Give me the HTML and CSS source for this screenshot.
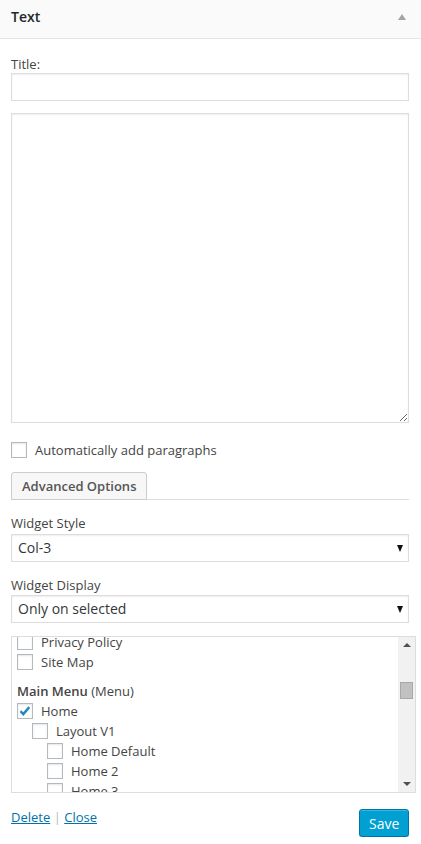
FILE: index.html
```html
<!DOCTYPE html>
<html lang="en">
<head>
    <meta charset="UTF-8">
    <meta name="viewport" content="width=device-width, initial-scale=1.0">
    <title>Text Widget</title>
    <link rel="stylesheet" href="styles.css">
</head>
<body>
    <div class="widget">
        <div class="widget-top">
            <h3>Text</h3>
            <span class="widget-toggle"></span>
        </div>

        <div class="widget-inside">
            <p class="field">
                <label for="title">Title:</label>
                <input type="text" id="title" class="widefat">
            </p>

            <textarea class="widefat text-body" rows="16"></textarea>

            <p class="check-row">
                <span class="cb"></span>
                <span>Automatically add paragraphs</span>
            </p>

            <div class="tabs">
                <button class="button">Advanced Options</button>
            </div>

            <p class="field select-field">
                <label>Widget Style</label>
                <span class="select-wrap">
                    <select class="widefat"><option>Col-3</option></select>
                </span>
            </p>

            <p class="field select-field">
                <label>Widget Display</label>
                <span class="select-wrap">
                    <select class="widefat"><option>Only on selected</option></select>
                </span>
            </p>

            <!-- page / menu checklist -->
            <div class="checklist">
                <div class="checklist-items">
                    <div class="item"><span class="cb"></span>Privacy Policy</div>
                    <div class="item"><span class="cb"></span>Site Map</div>
                    <div class="group-title"><strong>Main Menu</strong> (Menu)</div>
                    <div class="item">
                        <span class="cb checked">
                            <svg viewBox="0 0 16 16" width="16" height="16"><path d="M3.5 8.2l2.8 2.9 6-7" fill="none" stroke="#1e8cbe" stroke-width="2.4"/></svg>
                        </span>Home
                    </div>
                    <div class="item level-1"><span class="cb"></span>Layout V1</div>
                    <div class="item level-2"><span class="cb"></span>Home Default</div>
                    <div class="item level-2"><span class="cb"></span>Home 2</div>
                    <div class="item level-2"><span class="cb"></span>Home 3</div>
                </div>
                <div class="scrollbar">
                    <span class="arrow-up"></span>
                    <div class="track"><span class="thumb"></span></div>
                    <span class="arrow-down"></span>
                </div>
            </div>

            <div class="widget-control-actions">
                <div class="links">
                    <a href="#">Delete</a> <span class="sep">|</span> <a href="#">Close</a>
                </div>
                <button class="button button-primary">Save</button>
            </div>
        </div>
    </div>
</body>
</html>
```

FILE: styles.css
```css
/* Text widget (admin style) */
body {
    margin: 0;
    background: #fff;
    font-family: "Open Sans", "Liberation Sans", sans-serif;
    font-size: 13px;
    line-height: 18px;
    color: #444;
}

.widget-top {
    height: 38px;
    border-bottom: 1px solid #e5e5e5;
    background-color: #fafafa;
    display: flex;
    align-items: center;
    justify-content: space-between;
    padding: 0 15px 0 11px;
}

.widget-top h3 {
    margin: 0 0 5px;
    font-size: 14px;
    font-weight: 600;
    color: #23282d;
}

.widget-toggle {
    width: 0;
    height: 0;
    border-left: 4px solid transparent;
    border-right: 4px solid transparent;
    border-bottom: 6px solid #a0a5aa;
    margin-bottom: 5px;
}

.widget-inside {
    padding: 0 12px 0 11px;
}

.field {
    margin: 16px 0 0;
}

.field label {
    display: block;
}

.widefat {
    display: block;
    width: 100%;
    box-sizing: border-box;
    border: 1px solid #ddd;
    box-shadow: inset 0 1px 2px rgba(0,0,0,0.07);
    background-color: #fff;
    font-family: inherit;
    color: #32373c;
    margin: 0;
}

input.widefat {
    height: 28px;
}

.text-body {
    margin-top: 12px;
    height: 310px;
}

.check-row {
    margin: 18px 0 0;
    display: flex;
    align-items: center;
}

.cb {
    display: inline-block;
    width: 16px;
    height: 16px;
    box-sizing: border-box;
    border: 1px solid #b4b9be;
    background: #fff;
    box-shadow: inset 0 1px 2px rgba(0,0,0,0.1);
    margin-right: 8px;
    flex-shrink: 0;
}

.cb svg {
    display: block;
    margin: -1px;
}

.tabs {
    margin-top: 13px;
    border-bottom: 1px solid #ddd;
    display: flex;
}

.button {
    height: 28px;
    padding: 0 10px;
    border: 1px solid #ccc;
    border-radius: 3px;
    background: #f7f7f7;
    box-shadow: 0 1px 0 #ccc;
    font-family: inherit;
    font-size: 13px;
    font-weight: 600;
    color: #555;
    white-space: nowrap;
    cursor: pointer;
}

.tabs .button {
    min-width: 136px;
    border-radius: 3px 3px 0 0;
    box-shadow: none;
    margin-bottom: -1px;
}

.select-field {
    margin-top: 14px;
}

.select-field label {
    margin-bottom: 2px;
}

.select-wrap {
    display: block;
    position: relative;
}

.select-wrap select {
    -webkit-appearance: none;
    appearance: none;
    height: 28px;
    line-height: 26px;
    padding: 0 6px;
    font-size: 14px;
    border-radius: 0;
}

.select-wrap::after {
    content: "";
    position: absolute;
    right: 6px;
    top: 11px;
    border-left: 3.5px solid transparent;
    border-right: 3.5px solid transparent;
    border-top: 7px solid #111;
}

.select-field + .select-field {
    margin-top: 14px;
}

.select-field + .select-field label {
    margin-bottom: 1px;
}

/* checklist box */
.checklist {
    margin: 13px -7px 0 0;
    height: 157px;
    box-sizing: border-box;
    border: 1px solid #ddd;
    display: flex;
    overflow: hidden;
}

.checklist-items {
    flex: 1;
    overflow: hidden;
    padding-left: 5px;
}

.checklist-items .item:first-child {
    margin-top: -5px;
}

.item {
    height: 20px;
    display: flex;
    align-items: center;
    color: #444;
}

.level-1 {
    padding-left: 15px;
}

.level-2 {
    padding-left: 30px;
}

.group-title {
    margin-top: 9px;
    height: 20px;
    line-height: 20px;
}

.group-title strong {
    font-weight: 600;
}

.scrollbar {
    width: 17px;
    background: #f1f1f1;
    display: flex;
    flex-direction: column;
    align-items: center;
}

.arrow-up,
.arrow-down {
    width: 0;
    height: 0;
    border-left: 4px solid transparent;
    border-right: 4px solid transparent;
}

.arrow-up {
    border-bottom: 4px solid #505050;
    margin-top: 6px;
}

.arrow-down {
    border-top: 4px solid #505050;
    margin-bottom: 6px;
}

.track {
    flex: 1;
    width: 100%;
}

.thumb {
    display: block;
    width: 13px;
    height: 17px;
    margin: 35px auto 0;
    box-sizing: border-box;
    background: #c1c1c1;
    border: 1px solid #a8a8a8;
}

.widget-control-actions {
    margin-top: 16px;
    display: flex;
    justify-content: space-between;
    align-items: flex-start;
}

.links {
    margin-top: -1px;
}

.links a {
    color: #0073aa;
}

.links .sep {
    color: #b4b9be;
}

.button-primary {
    background: #00a0d2;
    border-color: #0073aa;
    box-shadow: inset 0 1px 0 rgba(120,200,230,0.5), 0 1px 0 rgba(0,0,0,0.15);
    color: #fff;
    font-weight: 400;
    font-size: 14px;
    padding: 0 9px;
    width: 50px;
}
```
